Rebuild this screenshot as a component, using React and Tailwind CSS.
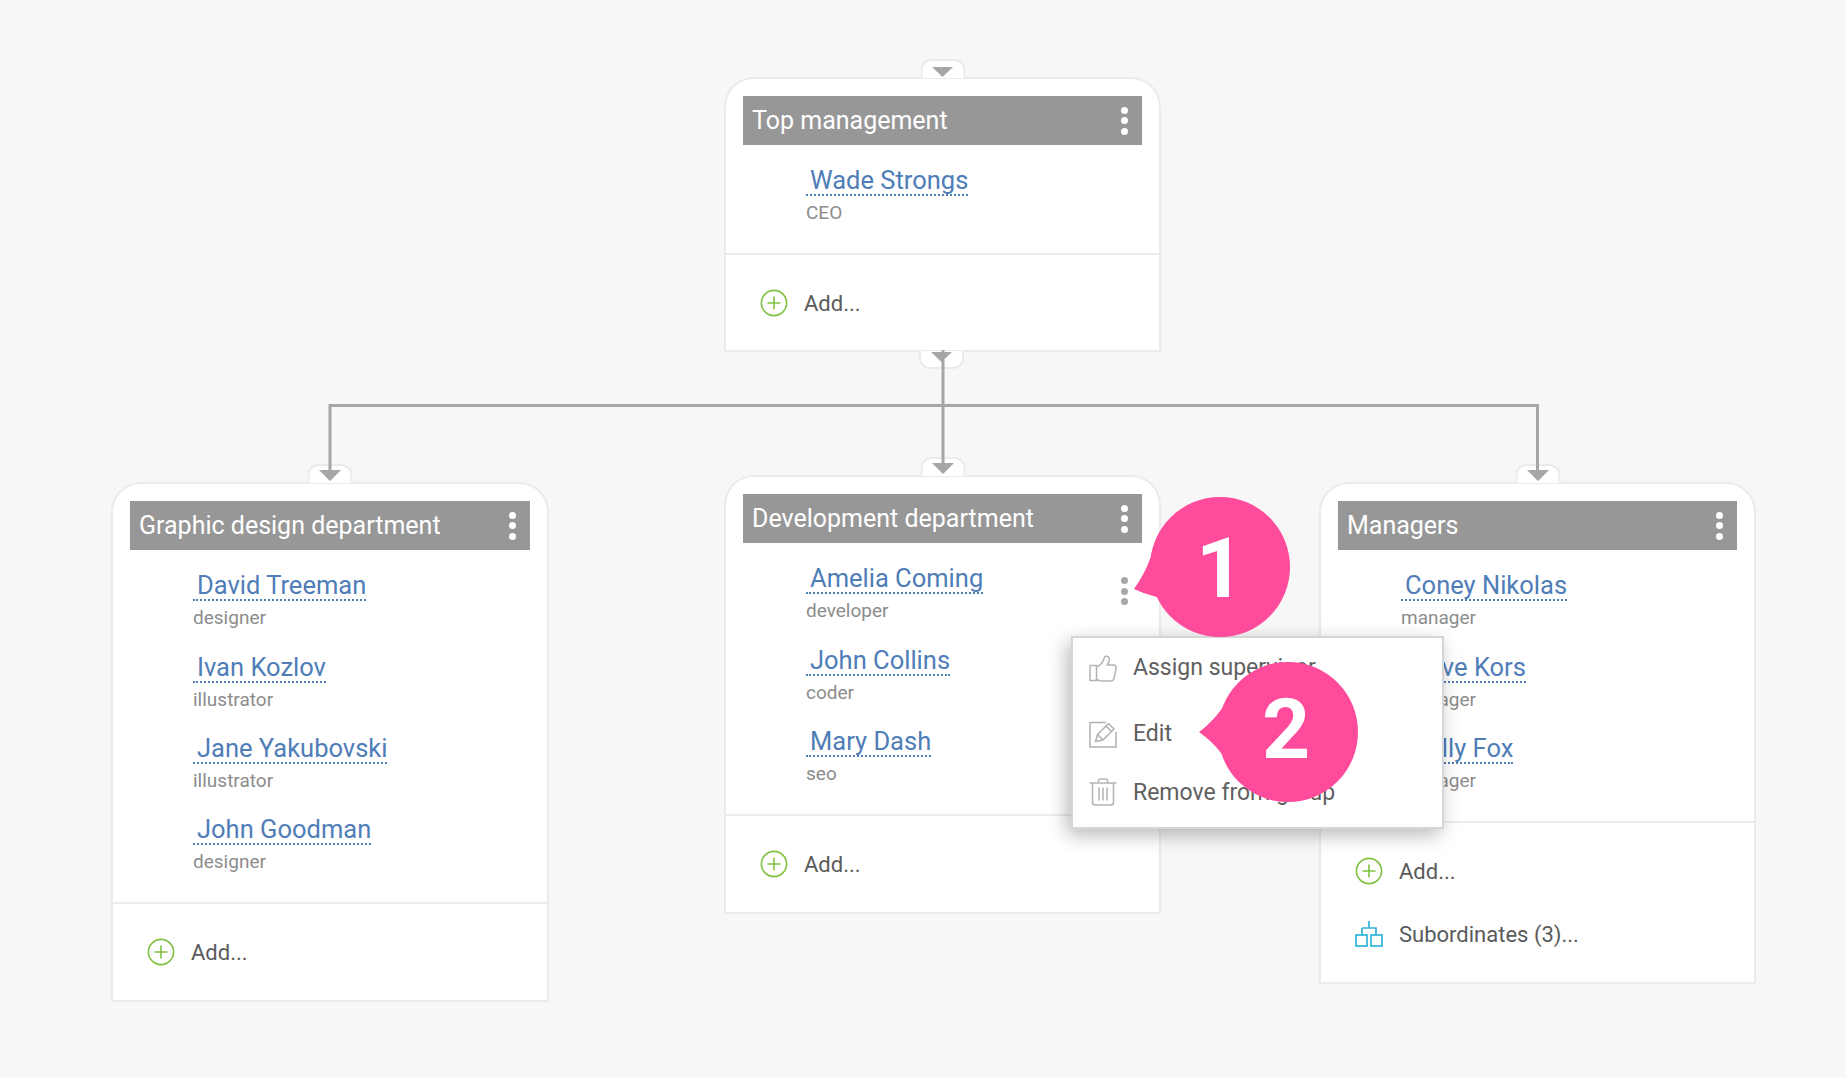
function Kebab({ light = false }) {
  const dot = light ? 'bg-white' : 'bg-[#a8a8a8]';
  return (
    <div className="flex flex-col gap-[3.5px] w-[7px]">
      <span className={`block w-[7px] h-[7px] rounded-full ${dot}`} />
      <span className={`block w-[7px] h-[7px] rounded-full ${dot}`} />
      <span className={`block w-[7px] h-[7px] rounded-full ${dot}`} />
    </div>
  );
}

function PlusIcon() {
  return (
    <svg width="28" height="28" viewBox="0 0 28 28" fill="none" stroke="#7fc241" strokeWidth="1.6">
      <circle cx="14" cy="14" r="12.6" />
      <path d="M14 7.500v13M7.500 14h13" />
    </svg>
  );
}

function TreeIcon() {
  return (
    <svg width="28" height="26" viewBox="0 0 28 26" fill="none" stroke="#2fb6d8" strokeWidth="1.7">
      <path d="M14 0v7M7 7h14v7M7 7v7" />
      <rect x="1" y="14" width="11" height="11" />
      <rect x="16" y="14" width="11" height="11" />
    </svg>
  );
}

function ThumbIcon() {
  return (
    <svg width="28" height="27" viewBox="0 0 28 27" fill="none" stroke="#b4b4b4" strokeWidth="1.5" strokeLinejoin="round">
      <path d="M1 10.500h6.500V25.500H1z" />
      <path d="M7.500 12C11 10.500 14 7 15 3.500 15.500 1 18 .5 19.500 2 21 4 20 7.500 18 10H24.500C26.500 10 27.500 11.500 27 13.500L25 23.500C24.500 25.500 23.200 26 21.500 26H12.500C10.500 26 9 25 7.500 24.500" />
    </svg>
  );
}

function EditIcon() {
  return (
    <svg width="28" height="27" viewBox="0 0 28 27" fill="none" stroke="#b0b0b0" strokeWidth="1.5" strokeLinejoin="round">
      <path d="M17 1.500H1V26H27V11" />
      <path d="M6.500 20.500 8.500 13.500 19.500 2.500 25 8 14 19Z" />
      <path d="M17 5l5.500 5.500M8.500 13.500 14 19" />
    </svg>
  );
}

function TrashIcon() {
  return (
    <svg className="-mt-[3px]" width="28" height="28" viewBox="0 0 28 28" fill="none" stroke="#b4b4b4" strokeWidth="1.5" strokeLinejoin="round">
      <path d="M0.500 5H27.500" />
      <path d="M9.500 5V3C9.500 1.800 10.500 1 11.500 1H16.500C17.500 1 18.500 1.800 18.500 3V5" />
      <path d="M3.500 5V24.500C3.500 26 4.500 27 6 27H22C23.500 27 24.500 26 24.500 24.500V5" />
      <path d="M10 9.500V22.500M14 9.500V22.500M18 9.500V22.500" />
    </svg>
  );
}

function Person({ name, role, kebab }) {
  return (
    <div className="h-[81.3px] flex justify-between pl-[80px] pr-[31px]">
      <div>
        <div className="h-[32px]">
          <span className="inline-block h-[31px] leading-[31px] pl-[4px] text-[25.500px] text-[#4f7db8] border-b-2 border-dotted border-[#4f7db8]">
            {name}
          </span>
        </div>
        <div className="mt-[4px] text-[19px] leading-[24px] text-[#8c8c8c]">{role}</div>
      </div>
      {kebab && <div className="pt-[14px]"><Kebab /></div>}
    </div>
  );
}

function ActionRow({ icon, label }) {
  return (
    <div className="h-[63px] flex items-center pl-[34px] text-[22px] text-[#5a5a5a]">
      <span className="w-[44px] flex">{icon}</span>
      <span className="pt-[2px]">{label}</span>
    </div>
  );
}

function Card({ title, people, actions, kebabOn, width = 'w-[437px]', bottomTab = false, className = '' }) {
  return (
    <div className={`relative ${width} bg-white border-2 border-[#ebebeb] rounded-t-[30px] ${className}`}>
      <div className="absolute -top-[20px] left-1/2 -translate-x-1/2 w-[45px] h-[19px] bg-white border-2 border-b-0 border-[#ebebeb] rounded-t-[11px]" />
      {bottomTab && (
        <div className="absolute -bottom-[19px] left-[193px] w-[45px] h-[18px] bg-white border-2 border-t-0 border-[#ebebeb] rounded-b-[11px]" />
      )}
      <div className="pt-[17px] px-[17px]">
        <div className="h-[49px] bg-[#979797] flex items-center justify-between pl-[9px] pr-[14px] text-white text-[25px]">
          <span>{title}</span>
          <Kebab light />
        </div>
      </div>
      <div className="pt-[20px] pb-[7px]">
        {people.map((p) => (
          <Person key={p[0]} name={p[0]} role={p[1]} kebab={p[0] === kebabOn} />
        ))}
      </div>
      <div className={`border-t-2 border-[#ebebeb] pt-[16px] ${bottomTab ? 'pb-[16px]' : 'pb-[17px]'}`}>
        {actions.map((a) => (
          <ActionRow key={a.label} icon={a.icon} label={a.label} />
        ))}
      </div>
    </div>
  );
}

function Connectors() {
  return (
    <svg className="absolute left-0 top-0 z-10" width="1846" height="500" fill="none">
      <path d="M943 350V470M330 471V405.500H1537.500V471" stroke="#a6a6a6" strokeWidth="3" />
      <path d="M932 67h21l-10.500 10zM931 352h21l-10.500 10zM932 463h22l-11 11zM319 470h22l-11 11zM1527 470h22l-11 11z" fill="#a6a6a6" />
    </svg>
  );
}

function MenuItem({ icon, label, className }) {
  return (
    <div className={`absolute left-[16px] flex items-center text-[23px] text-[#5f5f5f] ${className}`}>
      <span className="w-[44px] flex">{icon}</span>
      {label}
    </div>
  );
}

function ContextMenu() {
  return (
    <div className="absolute z-20 left-[1071px] top-[636px] w-[373px] h-[193px] bg-white border-2 border-[#d6d6d6] shadow-[-4px_6px_18px_rgba(0,0,0,0.28)]">
      <MenuItem icon={<ThumbIcon />} label="Assign supervisor" className="top-[13px]" />
      <MenuItem icon={<EditIcon />} label="Edit" className="top-[79px]" />
      <MenuItem icon={<TrashIcon />} label="Remove from group" className="top-[138px]" />
    </div>
  );
}

function Bubble({ digit, tail, className, digitClass }) {
  return (
    <div className={`absolute z-30 w-[166px] h-[140px] ${className}`}>
      <svg width="166" height="140" viewBox="0 0 166 140" className="absolute left-0 top-0" fill="#ff4b9b">
        <circle cx="96" cy="70" r="70" />
        <path d={tail} />
      </svg>
      <span className={`absolute text-white font-bold text-[84px] leading-none ${digitClass}`}>{digit}</span>
    </div>
  );
}

export default function App() {
  const add = { icon: <PlusIcon />, label: 'Add...' };
  const subs = { icon: <TreeIcon />, label: 'Subordinates (3)...' };
  return (
    <div className="relative w-[1846px] h-[1078px] overflow-hidden bg-[#f7f7f7] font-['Roboto',sans-serif]">
      <div className="pt-[77px] pl-[724px]">
        <Card title="Top management" people={[['Wade Strongs', 'CEO']]} actions={[add]} bottomTab />
      </div>
      <div className="mt-[130px] pl-[111px] flex items-start">
        <Card
          width="w-[437.5px]"
          title="Graphic design department"
          people={[
            ['David Treeman', 'designer'],
            ['Ivan Kozlov', 'illustrator'],
            ['Jane Yakubovski', 'illustrator'],
            ['John Goodman', 'designer'],
          ]}
          actions={[add]}
        />
        <Card
          className="ml-[175.5px] -mt-[7px]"
          title="Development department"
          kebabOn="Amelia Coming"
          people={[
            ['Amelia Coming', 'developer'],
            ['John Collins', 'coder'],
            ['Mary Dash', 'seo'],
          ]}
          actions={[add]}
        />
        <Card
          className="ml-[158px]"
          title="Managers"
          people={[
            ['Coney Nikolas', 'manager'],
            ['Steve Kors', 'manager'],
            ['Molly Fox', 'manager'],
          ]}
          actions={[add, subs]}
        />
      </div>
      <Connectors />
      <ContextMenu />
      <Bubble
        digit="1"
        className="left-[1124px] top-[497px]"
        tail="M10 92C20 78 26 64 30 50L45 105C38 100 24 99 10 92Z"
        digitClass="left-[72px] top-[30px]"
      />
      <Bubble
        digit="2"
        className="left-[1192px] top-[662px]"
        tail="M7 70C18 62 26 52 32 44V95C26 86 18 78 7 70Z"
        digitClass="left-[70px] top-[26px]"
      />
    </div>
  );
}
